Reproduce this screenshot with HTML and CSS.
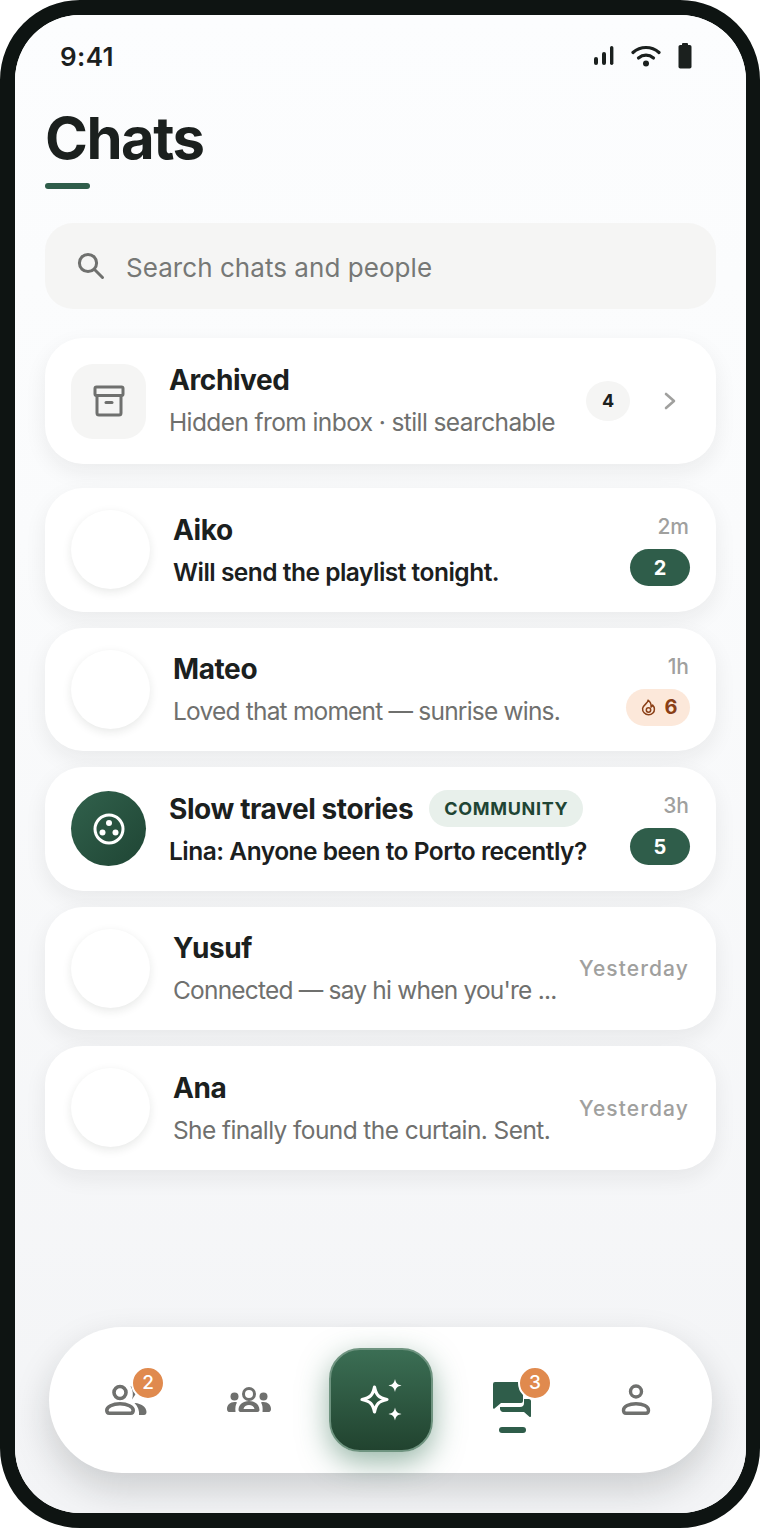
FILE: index.html
```html
<!DOCTYPE html>
<html>
  <head>
    <meta charset="utf-8">
    <meta name="viewport" content="width=device-width, initial-scale=1">
    <title>Chats</title>
    <link rel="stylesheet" href="styles.css">
  </head>
  <body>
    <div class="phone">
      <div class="screen">
        <div class="status">
          <span class="clock">9:41</span>
          <div class="status-icons">
            <svg width="20" height="20" viewBox="0 0 20 20" fill="#1b201e"><rect x="0" y="11" width="4" height="8" rx="2"/><rect x="8" y="6" width="4" height="13" rx="2"/><rect x="16" y="0" width="3.4" height="19" rx="1.7"/></svg>
            <svg width="30" height="22" viewBox="0 0 30 22" fill="none" stroke="#1b201e" stroke-width="3.2" stroke-linecap="round"><path d="M2 7.5C9.5 .8 20.5 .8 28 7.5"/><path d="M7.5 13C12 9.2 18 9.2 22.5 13"/><circle cx="15" cy="18.5" r="3" fill="#1b201e" stroke="none"/></svg>
            <svg width="14" height="26" viewBox="0 0 14 26" fill="#1b201e"><rect x="4" y="0" width="6" height="4" rx="1"/><rect x="0.5" y="2" width="13" height="23.5" rx="1.8"/></svg>
          </div>
        </div>

        <h1>Chats</h1>
        <div class="title-bar"></div>

        <div class="search">
          <svg width="28" height="28" viewBox="0 0 28 28" fill="none" stroke="#6f706e" stroke-width="3" stroke-linecap="round"><circle cx="11" cy="11" r="8.6"/><path d="M17.5 17.5L25.5 25.5"/></svg>
          <span>Search chats and people</span>
        </div>

        <div class="list">
          <div class="card card-archived">
            <div class="tile">
              <svg width="32" height="32" viewBox="0 0 32 32" fill="none" stroke="#6f706e" stroke-width="3" stroke-linejoin="round" stroke-linecap="round"><rect x="2" y="2" width="28" height="8.5" rx="1.5"/><path d="M4 10.5V28a2 2 0 0 0 2 2h20a2 2 0 0 0 2-2V10.5"/><path d="M13 17.5h6"/></svg>
            </div>
            <div class="body">
              <div class="name">Archived</div>
              <div class="preview">Hidden from inbox · still searchable</div>
            </div>
            <span class="count">4</span>
            <svg class="chevron" width="14" height="18" viewBox="0 0 14 18" fill="none" stroke="#a0a09e" stroke-width="2.6" stroke-linecap="round" stroke-linejoin="round"><path d="M3 2l8 7-8 7"/></svg>
          </div>

          <div class="card">
            <div class="avatar"></div>
            <div class="body">
              <div class="name">Aiko</div>
              <div class="preview unread">Will send the playlist tonight.</div>
            </div>
            <div class="meta">
              <span class="time">2m</span>
              <span class="pill">2</span>
            </div>
          </div>

          <div class="card">
            <div class="avatar"></div>
            <div class="body">
              <div class="name">Mateo</div>
              <div class="preview tight">Loved that moment — sunrise wins.</div>
            </div>
            <div class="meta">
              <span class="time">1h</span>
              <span class="pill pill-streak">
                <svg width="15" height="17" viewBox="0 0 15 17" fill="none" stroke="#8a3f16" stroke-width="1.5" stroke-linejoin="round"><path d="M7 1.2c.6 2.4-4.8 4.6-5.4 8.2-.4 3.300 2.500 6.400 6 6.400s6-2.700 5.800-5.800c-.1-1.800-1-3.100-1.800-3.900-.2 1-.7 1.700-1.500 2C10.300 5.500 9.300 2.700 7 1.200z"/><circle cx="7.500" cy="11" r="2.200"/></svg>
                6
              </span>
            </div>
          </div>

          <div class="card">
            <div class="avatar-group">
              <svg width="34" height="34" viewBox="0 0 34 34"><circle cx="17" cy="17" r="14" fill="none" stroke="#fff" stroke-width="3"/><g fill="#fff"><circle cx="17" cy="11" r="3"/><circle cx="10.500" cy="20.500" r="3"/><circle cx="23.500" cy="20.500" r="3"/></g></svg>
            </div>
            <div class="body">
              <div class="name-row">
                <div class="name">Slow travel stories</div>
                <span class="tag">COMMUNITY</span>
              </div>
              <div class="preview unread">Lina: Anyone been to Porto recently?</div>
            </div>
            <div class="meta">
              <span class="time">3h</span>
              <span class="pill">5</span>
            </div>
          </div>

          <div class="card">
            <div class="avatar"></div>
            <div class="body">
              <div class="name">Yusuf</div>
              <div class="preview tight">Connected — say hi when you're ...</div>
            </div>
            <div class="meta">
              <span class="time time-long">Yesterday</span>
            </div>
          </div>

          <div class="card">
            <div class="avatar"></div>
            <div class="body">
              <div class="name">Ana</div>
              <div class="preview">She finally found the curtain. Sent.</div>
            </div>
            <div class="meta">
              <span class="time time-long">Yesterday</span>
            </div>
          </div>
        </div>

        <div class="nav">
          <div class="nav-item">
            <svg width="44" height="36" viewBox="0 0 44 36"><g fill="none" stroke="#6f706e" stroke-width="3.600"><circle cx="17" cy="10.500" r="6"/><path d="M17 21.800c-7.500 0-13.200 3-13.200 6.500 0 2 1 2.900 2.500 2.900h21.400c1.500 0 2.500-.9 2.500-2.900 0-3.500-5.700-6.500-13.200-6.500z"/></g><g fill="#6f706e"><path d="M32 21c6 .5 11.500 4 11.500 9 0 2-1 3-2.500 3h-5c.5-4-1-8.500-4.500-12z"/><path d="M27.500 4c3.500 1 5.500 4 5.500 7.500l-4 6c1.500-4 1-9.500-1.500-13.500z"/></g></svg>
            <span class="nav-badge">2</span>
          </div>
          <div class="nav-item">
            <svg width="46" height="26" viewBox="0 0 46 26" fill="#6f706e"><circle cx="23" cy="7" r="5.500" fill="none" stroke="#6f706e" stroke-width="3"/><circle cx="8.500" cy="9.500" r="4"/><circle cx="37.500" cy="9.500" r="4"/><path d="M12.500 23c0-5.500 4.500-9 10.500-9s10.500 3.500 10.500 9c0 1-1 2-2 2h-17c-1 0-2-1-2-2zm5-1h11c-.5-2.500-2.800-4-5.500-4s-5 1.500-5.500 4z" fill-rule="evenodd"/><path d="M1 22c0-4 3-7 7.500-7 1 0 1.800.1 2.500.4-1.300 2-2 5-1.500 9.600H3c-1.200 0-2-1.400-2-3z"/><path d="M45 22c0-4-3-7-7.500-7-1 0-1.800.1-2.500.4 1.300 2 2 5 1.500 9.600H43c1.200 0 2-1.400 2-3z"/></svg>
          </div>
          <div class="fab">
            <svg width="50" height="50" viewBox="0 0 50 50"><path d="M18.500 12c1.600 8 4.200 10.800 12.500 12.500-8.300 1.700-10.900 4.500-12.500 12.500-1.600-8-4.200-10.800-12.500-12.500 8.300-1.700 10.900-4.500 12.500-12.500z" fill="none" stroke="#fff" stroke-width="3.200" stroke-linejoin="round"/><path d="M39 4c1 4.300 2.300 5.500 6.500 6.500-4.200 1-5.500 2.200-6.500 6.500-1-4.300-2.300-5.500-6.500-6.500 4.200-1 5.500-2.200 6.500-6.500z" fill="#fff"/><path d="M39 32.500c1 4.300 2.300 5.500 6.500 6.500-4.200 1-5.500 2.200-6.500 6.500-1-4.300-2.300-5.500-6.500-6.500 4.200-1 5.500-2.200 6.500-6.500z" fill="#fff"/></svg>
          </div>
          <div class="nav-item">
            <svg width="38" height="36" viewBox="0 0 38 36" fill="#2f5d4a"><path d="M2 0h26a2 2 0 0 1 2 2v17a2 2 0 0 1-2 2H8l-6.500 5.500c-.5.400-1.500.2-1.500-.5V2a2 2 0 0 1 2-2z"/><path d="M27 17h9a2 2 0 0 1 2 2v15c0 1-1 1.300-1.600.7L31 30H10c-1.500 0-3-1.500-3-3v-2h20a4 4 0 0 0 4-4v-4z"/></svg>
            <span class="nav-badge">3</span>
            <span class="nav-active"></span>
          </div>
          <div class="nav-item">
            <svg width="32" height="36" viewBox="0 0 32 36" fill="none" stroke="#6f706e" stroke-width="3.400"><circle cx="16" cy="9.500" r="5.500"/><path d="M16 21.700c-7 0-12.500 2.800-12.500 6.500 0 2 1 3 2.500 3h20c1.500 0 2.500-1 2.500-3 0-3.700-5.500-6.500-12.500-6.500z"/></svg>
          </div>
        </div>
      </div>
    </div>
  </body>
</html>
```

FILE: styles.css
```css
* {
  box-sizing: border-box;
}

html,
body {
  margin: 0;
  background: #fff;
}

body {
  font-family: Inter, "Liberation Sans", sans-serif;
  color: #1b201e;
}

.phone {
  width: 760px;
  height: 1528px;
  border: 15px solid #0e1412;
  border-right-width: 14px;
  border-radius: 80px;
  overflow: hidden;
}

.screen {
  height: 100%;
  padding: 0 30px 40px;
  display: flex;
  flex-direction: column;
  background: linear-gradient(180deg, #fcfdfe 0%, #fafbfc 35%, #f3f4f6 100%);
}

.status {
  display: flex;
  justify-content: space-between;
  align-items: center;
  height: 26px;
  margin-top: 28px;
  padding: 0 24px 0 15px;
}

.clock {
  font-size: 26px;
  font-weight: 600;
  letter-spacing: 0.4px;
}

.status-icons {
  display: flex;
  align-items: center;
  gap: 17px;
}

h1 {
  margin: 34px 0 0;
  font-size: 58px;
  line-height: 70px;
  font-weight: 700;
  letter-spacing: -1.5px;
}

.title-bar {
  width: 45px;
  height: 6px;
  margin-top: 10px;
  border-radius: 3px;
  background: #2f5d4a;
}

.search {
  display: flex;
  align-items: center;
  gap: 21px;
  height: 86px;
  margin-top: 34px;
  padding: 0 32px;
  border-radius: 28px;
  background: #f5f5f4;
  font-size: 26px;
}

.search span {
  margin-top: 2px;
  letter-spacing: 0.05px;
  color: #767876;
}

.list {
  display: flex;
  flex-direction: column;
  gap: 16px;
  margin-top: 29px;
}

.card {
  display: flex;
  align-items: center;
  gap: 23px;
  height: 123.5px;
  padding: 0 26px;
  border-radius: 38px;
  background: #fff;
  box-shadow: 0 8px 22px rgba(25, 35, 30, 0.07);
}

.card-archived {
  height: 126px;
  margin-bottom: 8px;
}

.tile {
  flex: none;
  display: flex;
  align-items: center;
  justify-content: center;
  width: 75px;
  height: 75px;
  border-radius: 22px;
  background: #f5f5f4;
}

.avatar {
  flex: none;
  width: 79px;
  height: 79px;
  border-radius: 50%;
  background: #fff;
  box-shadow: 0 3px 10px rgba(25, 35, 30, 0.1);
}

.avatar-group {
  flex: none;
  display: flex;
  align-items: center;
  justify-content: center;
  width: 75px;
  height: 75px;
  border-radius: 50%;
  background: linear-gradient(135deg, #31614c, #1f4534);
}

.body {
  flex: 1;
  min-width: 0;
  padding-top: 2px;
}

.card-archived .body {
  padding-top: 0;
}

.name {
  font-size: 28px;
  line-height: 36px;
  font-weight: 700;
  letter-spacing: -0.4px;
  white-space: nowrap;
}

.name-row {
  display: flex;
  align-items: center;
  gap: 16px;
}

.preview {
  margin-top: 6px;
  font-size: 24.5px;
  line-height: 36px;
  letter-spacing: -0.6px;
  color: #6f706e;
  white-space: nowrap;
}

.tight {
  letter-spacing: -0.8px;
}

.unread {
  font-weight: 600;
  letter-spacing: -0.5px;
  color: #1b201e;
}

.tag {
  height: 37px;
  padding: 0 15px;
  border-radius: 19px;
  background: #e8f0eb;
  color: #1f4534;
  font-size: 18px;
  line-height: 37px;
  font-weight: 700;
  letter-spacing: 0.7px;
}

.count {
  flex: none;
  width: 44px;
  height: 40px;
  border-radius: 50%;
  background: #f5f5f4;
  text-align: center;
  font-size: 18px;
  line-height: 40px;
  font-weight: 700;
}

.chevron {
  flex: none;
  margin: 0 13px 0 10px;
}

.meta {
  flex: none;
  display: flex;
  flex-direction: column;
  align-items: flex-end;
  gap: 10px;
  padding-top: 2px;
}

.time {
  padding-right: 1px;
  font-size: 21px;
  line-height: 24px;
  font-weight: 500;
  color: #a0a09e;
}

.time-long {
  letter-spacing: 1.1px;
}

.pill {
  display: flex;
  align-items: center;
  justify-content: center;
  gap: 9px;
  width: 60px;
  height: 37px;
  border-radius: 19px;
  background: #2f5d4a;
  color: #fff;
  font-size: 20px;
  font-weight: 700;
}

.pill-streak {
  width: 64px;
  padding-left: 2px;
  background: #fce8da;
  color: #8a3f16;
}

.nav {
  display: grid;
  grid-template-columns: 1fr 1fr 139px 1fr 1fr;
  align-items: center;
  justify-items: center;
  height: 146px;
  margin: auto 4px 0;
  padding: 0 14px;
  border-radius: 73px;
  background: #fff;
  box-shadow: 0 16px 36px rgba(20, 30, 25, 0.18);
}

.nav-item {
  position: relative;
  display: flex;
  align-items: center;
  justify-content: center;
  width: 60px;
  height: 50px;
}

.nav-badge {
  position: absolute;
  top: -9px;
  right: -10px;
  width: 34px;
  height: 34px;
  border: 2px solid #fff;
  border-radius: 50%;
  background: #e08a4e;
  color: #fff;
  text-align: center;
  font-size: 19px;
  line-height: 30px;
  font-weight: 500;
}

.nav-active {
  position: absolute;
  left: 17px;
  bottom: -8px;
  width: 27px;
  height: 6px;
  border-radius: 3px;
  background: #2f5d4a;
}

.fab {
  display: flex;
  align-items: center;
  justify-content: center;
  width: 104px;
  height: 104px;
  border: 2px solid #6f9480;
  border-radius: 31px;
  background: linear-gradient(180deg, #3b6e54 0%, #21432f 100%);
  box-shadow: 0 10px 30px rgba(47, 110, 80, 0.5);
}
```
